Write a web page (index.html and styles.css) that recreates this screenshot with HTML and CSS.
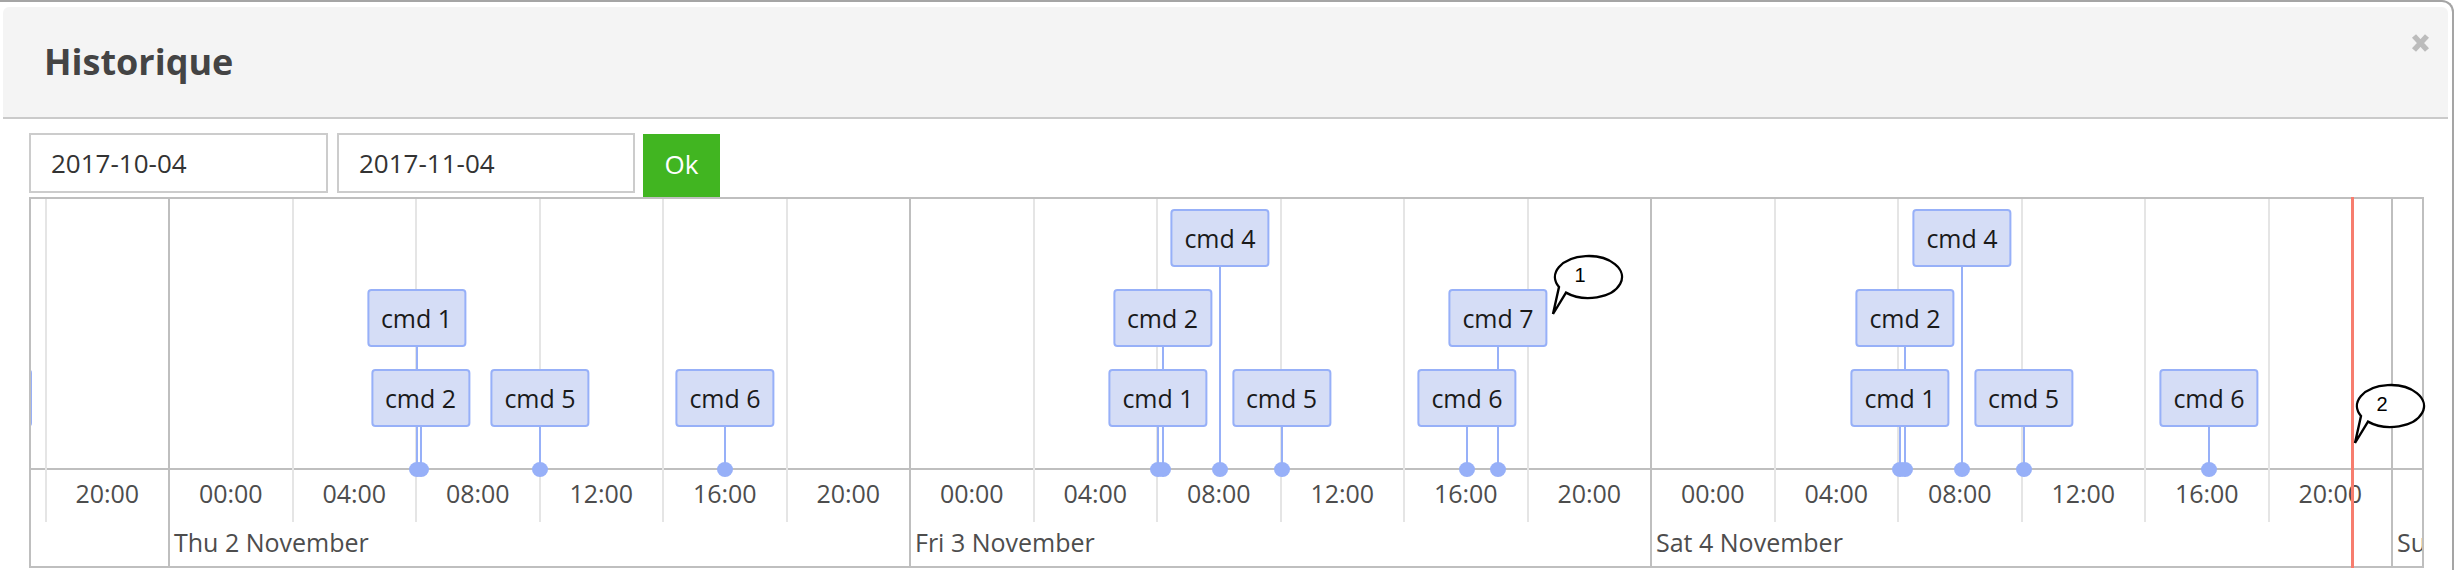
FILE: index.html
```html
<!DOCTYPE html>
<html lang="fr">
<head>
<meta charset="utf-8">
<title>Historique</title>
<link rel="stylesheet" href="styles.css">
</head>
<body>
<div class="dialog">
  <div class="header">
    <h4 class="title">Historique</h4>
    <span class="close" aria-label="Fermer">
      <svg width="19" height="20" viewBox="0 0 19 20"><path d="M3 3 L16 17 M16 3 L3 17" stroke="#bcbcbc" stroke-width="5.5"/></svg>
    </span>
  </div>
  <div class="body">
    <div class="form">
      <input class="field field-start" type="text" value="2017-10-04">
      <input class="field field-end" type="text" value="2017-11-04">
      <button class="ok" type="button">Ok</button>
    </div>
    <div class="timeline">
      <div class="canvas">
        <div class="axis"></div>

        <div class="grid minor" style="left:13.5px"></div>
        <div class="grid major" style="left:137px"></div>
        <div class="grid minor" style="left:260.5px"></div>
        <div class="grid minor" style="left:384px"></div>
        <div class="grid minor" style="left:507.5px"></div>
        <div class="grid minor" style="left:631px"></div>
        <div class="grid minor" style="left:754.5px"></div>
        <div class="grid major" style="left:878px"></div>
        <div class="grid minor" style="left:1001.5px"></div>
        <div class="grid minor" style="left:1125px"></div>
        <div class="grid minor" style="left:1248.5px"></div>
        <div class="grid minor" style="left:1372px"></div>
        <div class="grid minor" style="left:1495.5px"></div>
        <div class="grid major" style="left:1619px"></div>
        <div class="grid minor" style="left:1742.5px"></div>
        <div class="grid minor" style="left:1866px"></div>
        <div class="grid minor" style="left:1989.5px"></div>
        <div class="grid minor" style="left:2113px"></div>
        <div class="grid minor" style="left:2236.5px"></div>
        <div class="grid major" style="left:2360px"></div>

        <div class="minor-label" style="left:14.5px">20:00</div>
        <div class="minor-label" style="left:138px">00:00</div>
        <div class="minor-label" style="left:261.5px">04:00</div>
        <div class="minor-label" style="left:385px">08:00</div>
        <div class="minor-label" style="left:508.5px">12:00</div>
        <div class="minor-label" style="left:632px">16:00</div>
        <div class="minor-label" style="left:755.5px">20:00</div>
        <div class="minor-label" style="left:879px">00:00</div>
        <div class="minor-label" style="left:1002.5px">04:00</div>
        <div class="minor-label" style="left:1126px">08:00</div>
        <div class="minor-label" style="left:1249.5px">12:00</div>
        <div class="minor-label" style="left:1373px">16:00</div>
        <div class="minor-label" style="left:1496.5px">20:00</div>
        <div class="minor-label" style="left:1620px">00:00</div>
        <div class="minor-label" style="left:1743.5px">04:00</div>
        <div class="minor-label" style="left:1867px">08:00</div>
        <div class="minor-label" style="left:1990.5px">12:00</div>
        <div class="minor-label" style="left:2114px">16:00</div>
        <div class="minor-label" style="left:2237.5px">20:00</div>

        <div class="major-label" style="left:143px">Thu 2 November</div>
        <div class="major-label" style="left:884px">Fri 3 November</div>
        <div class="major-label" style="left:1625px">Sat 4 November</div>
        <div class="major-label" style="left:2366px">Sun 5 November</div>

        <div class="item r3" style="left:-48px"><span class="stem"></span><span class="dot"></span><div class="box box-empty"></div></div>

        <div class="item r2" style="left:385.5px"><span class="stem"></span><span class="dot"></span><div class="box">cmd 1</div></div>
        <div class="item r3" style="left:389.5px"><span class="stem"></span><span class="dot"></span><div class="box">cmd 2</div></div>
        <div class="item r3" style="left:509px"><span class="stem"></span><span class="dot"></span><div class="box">cmd 5</div></div>
        <div class="item r3" style="left:694px"><span class="stem"></span><span class="dot"></span><div class="box">cmd 6</div></div>

        <div class="item r3" style="left:1127px"><span class="stem"></span><span class="dot"></span><div class="box">cmd 1</div></div>
        <div class="item r2" style="left:1131.5px"><span class="stem"></span><span class="dot"></span><div class="box">cmd 2</div></div>
        <div class="item r1" style="left:1189px"><span class="stem"></span><span class="dot"></span><div class="box">cmd 4</div></div>
        <div class="item r3" style="left:1250.5px"><span class="stem"></span><span class="dot"></span><div class="box">cmd 5</div></div>
        <div class="item r3" style="left:1436px"><span class="stem"></span><span class="dot"></span><div class="box">cmd 6</div></div>
        <div class="item r2" style="left:1467px"><span class="stem"></span><span class="dot"></span><div class="box">cmd 7</div></div>

        <div class="item r3" style="left:1869px"><span class="stem"></span><span class="dot"></span><div class="box">cmd 1</div></div>
        <div class="item r2" style="left:1874px"><span class="stem"></span><span class="dot"></span><div class="box">cmd 2</div></div>
        <div class="item r1" style="left:1931px"><span class="stem"></span><span class="dot"></span><div class="box">cmd 4</div></div>
        <div class="item r3" style="left:1992.5px"><span class="stem"></span><span class="dot"></span><div class="box">cmd 5</div></div>
        <div class="item r3" style="left:2178px"><span class="stem"></span><span class="dot"></span><div class="box">cmd 6</div></div>
      </div>

      <div class="now" style="left:2320px"></div>

      <svg class="callout" style="left:1519px; top:53px" width="76" height="66" viewBox="0 0 76 66">
        <path d="M9 35 L3 62 L16 40.6 A33.5 21 0 1 0 9 35 Z" fill="#fff" stroke="#000" stroke-width="2.4" stroke-linejoin="miter"/>
        <text x="30" y="30" text-anchor="middle">1</text>
      </svg>
      <svg class="callout" style="left:2321px; top:182px" width="76" height="66" viewBox="0 0 76 66">
        <path d="M9 35 L3 62 L16 40.6 A33.5 21 0 1 0 9 35 Z" fill="#fff" stroke="#000" stroke-width="2.4" stroke-linejoin="miter"/>
        <text x="30" y="30" text-anchor="middle">2</text>
      </svg>
    </div>
  </div>
</div>
</body>
</html>
```

FILE: styles.css
```css
html, body {
  margin: 0;
  padding: 0;
  background: #fff;
}

body {
  width: 2454px;
  height: 570px;
  overflow: hidden;
  font-family: "Open Sans", "Noto Sans", sans-serif;
}

.dialog {
  box-sizing: border-box;
  width: 2454px;
  height: 570px;
  border-top: 2px solid #a5a5a5;
  border-right: 2px solid #a5a5a5;
  border-top-right-radius: 12px;
  padding: 5px 4px 0 3px;
}

.header {
  height: 110px;
  background: #f4f4f4;
  border-bottom: 2px solid #cacaca;
  border-radius: 6px 6px 0 0;
  display: flex;
  align-items: center;
  justify-content: space-between;
  padding: 0 18px 0 41px;
}

.title {
  margin: 0;
  font-weight: 700;
  font-size: 36px;
  line-height: 38px;
  color: #444;
}

.close {
  align-self: flex-start;
  margin-top: 26px;
  width: 19px;
  height: 20px;
  filter: blur(0.4px);
}

.close svg {
  display: block;
}

.body {
  padding: 14px 24px 0 26px;
}

.form {
  display: flex;
  align-items: flex-start;
  height: 64px;
}

.field {
  box-sizing: border-box;
  height: 60px;
  margin: 0;
  border: 2px solid #cccccc;
  border-radius: 0;
  padding: 0 0 0 20px;
  font-family: "Open Sans", "Noto Sans", sans-serif;
  font-size: 26px;
  color: #333;
  background: #fff;
  outline: none;
}

.field-start {
  width: 299px;
  margin-right: 9px;
}

.field-end {
  width: 298px;
  margin-right: 8px;
}

.ok {
  box-sizing: border-box;
  width: 77px;
  height: 63px;
  margin: 1px 0 0;
  padding: 0 0 3px;
  border: none;
  border-radius: 0;
  background: #41b521;
  color: #fff;
  font-family: "Open Sans", "Noto Sans", sans-serif;
  font-size: 26px;
  line-height: 60px;
  text-align: center;
}

.timeline {
  position: relative;
  box-sizing: border-box;
  height: 371px;
  border: 2px solid #bfbfbf;
  background: #fff;
}

.canvas {
  position: absolute;
  left: 0;
  top: 0;
  right: 0;
  bottom: 0;
  overflow: hidden;
  font-size: 25px;
  line-height: 34px;
  color: #4d4d4d;
}

.axis {
  position: absolute;
  left: 0;
  right: 0;
  top: 269px;
  height: 2px;
  background: #bfbfbf;
}

.grid {
  position: absolute;
  top: 0;
  width: 2px;
}

.grid.minor {
  height: 323px;
  background: #e5e5e5;
}

.grid.major {
  height: 100%;
  background: #bfbfbf;
}

.minor-label {
  position: absolute;
  top: 277px;
  width: 123.5px;
  text-align: center;
  white-space: nowrap;
}

.major-label {
  position: absolute;
  top: 326px;
  white-space: nowrap;
}

.item {
  position: absolute;
  top: 0;
  width: 0;
  height: 100%;
}

.stem {
  position: absolute;
  left: -1px;
  width: 2px;
  background: #97b0f8;
  z-index: 1;
}

.dot {
  position: absolute;
  left: -8px;
  top: 262.5px;
  width: 16px;
  height: 15px;
  border-radius: 50%;
  background: #97b0f8;
  z-index: 3;
}

.box {
  position: absolute;
  left: 0;
  transform: translateX(-50%);
  box-sizing: border-box;
  height: 58px;
  padding: 1px 12px 0;
  border: 2px solid #97b0f8;
  border-radius: 4px;
  background: #d5ddf6;
  color: #1a1a1a;
  font-size: 25px;
  line-height: 53px;
  white-space: nowrap;
  z-index: 2;
}

.box-empty {
  width: 98px;
}

.r1 .box { top: 10px; }
.r2 .box { top: 90px; }
.r3 .box { top: 170px; }

.r1 .stem { top: 68px; height: 202px; }
.r2 .stem { top: 148px; height: 122px; }
.r3 .stem { top: 228px; height: 42px; }

.now {
  position: absolute;
  top: -2px;
  bottom: -2px;
  width: 3px;
  background: #f77d6e;
  z-index: 5;
}

.callout {
  position: absolute;
  overflow: visible;
  z-index: 6;
}

.callout text {
  font-family: "Liberation Sans", Arial, sans-serif;
  font-size: 20px;
  fill: #000;
}
```
